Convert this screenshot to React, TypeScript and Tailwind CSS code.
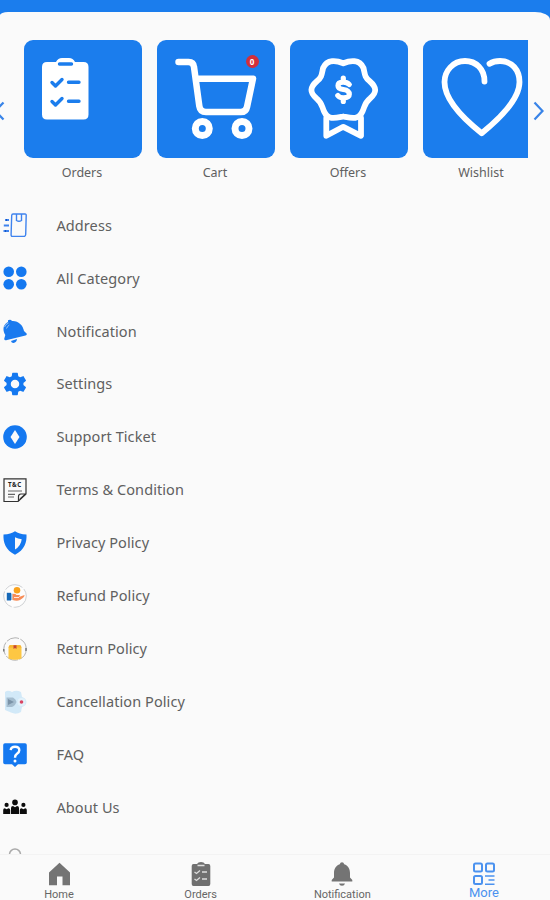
import React from 'react';

const OrdersArt = () => (
  <svg viewBox="0 0 118 118" className="h-full w-full" fill="none" strokeLinecap="round" strokeLinejoin="round">
    <path d="M23 22H32Q34 18 38 18H45Q49 18 51 22H59.500Q64.500 22 64.500 27V74.500Q64.500 79.500 59.500 79.500H23Q18 79.500 18 74.500V27Q18 22 23 22Z" fill="#fff" />
    <path d="M35.500 24H47.500M44.500 42.300H55M44.500 61.300H55" stroke="#1b7ded" strokeWidth="3.400" />
    <path d="M28 42.500L31.500 46L38 39.500M28 61.500L31.500 65L38 58.500" stroke="#1b7ded" strokeWidth="3.400" />
  </svg>
);

const CartArt = () => (
  <svg viewBox="0 0 118 118" className="h-full w-full" fill="none" stroke="#fff" strokeWidth="6.500" strokeLinecap="round" strokeLinejoin="round">
    <path d="M21.500 22H31.500Q36.500 22 37 27L42.300 66Q43.200 72 49 72H84Q89 72 90 67L96 38.700H39.500" />
    <circle cx="45.300" cy="88.500" r="7" strokeWidth="7" />
    <circle cx="85" cy="88.500" r="7" strokeWidth="7" />
  </svg>
);

const OffersArt = () => (
  <svg viewBox="0 0 118 118" className="h-full w-full" fill="none" stroke="#fff" strokeWidth="5.800" strokeLinecap="round" strokeLinejoin="round">
    <path d="M53.300 23.300C60 20.500 69.500 19 73.500 28C75 34.500 74.500 37 79.500 41C87 47.500 87 52.500 80 58.500C74.500 63 75 66 72.500 71.500C68.500 80.500 61 78 53.300 76.500C45.600 78 38.100 80.500 34.100 71.500C31.600 66 32.100 63 26.600 58.500C19.600 52.500 19.600 47.500 27.100 41C32.100 37 31.600 34.500 33.100 28C37.100 19 46.600 20.500 53.300 23.300Z" />
    <path d="M36.300 78V95.800L53.300 86.800L71 95.800V78" />
    <path d="M59.300 44.500Q57 42.200 53.300 42.200Q48 42.200 48 45.700Q48 48.700 53.300 49.500Q59.300 50.300 59.300 54.300Q59.300 57.800 53.300 57.800Q49.500 57.800 47.800 55.500M53.300 38V41M53.300 59V61.500" strokeWidth="5.200" />
  </svg>
);

const HeartArt = () => (
  <svg viewBox="0 0 118 118" className="h-full w-full" fill="none" stroke="#fff" strokeWidth="5.800" strokeLinecap="round" strokeLinejoin="round">
    <path d="M61.500 41.500C61.500 29 53 21 42 21C30 21 21.500 31 21.500 42C21.500 60 42 80 58.700 93.200C75 80 96.500 60 96.500 42C96.500 30 89 21 77 21Q71 21 66.500 23.800" />
  </svg>
);

const AddressIcon = () => (
  <svg viewBox="0 0 24 24" className="h-6 w-6" fill="none" stroke="#3f83ee" strokeWidth="1.400">
    <path d="M10 1H22Q23.300 1 23.200 2.500L22.700 21.500Q22.500 23.400 21 23.400H9.700Q8 23.400 8.100 21.500L8.700 2.500Q8.800 1 10 1Z" />
    <path d="M13.500 1V7.500Q16 9 18.500 7.500V1" />
    <path d="M2 7H6M.8 12.500H6M.5 18H6" strokeWidth="2" />
    <path d="M3 7H4M2 18H3" stroke="#1555c0" strokeWidth="2" />
  </svg>
);

const CategoryIcon = () => (
  <svg viewBox="0 0 24 24" className="h-6 w-6" fill="#1478f0">
    <circle cx="5.700" cy="5.700" r="5.300" />
    <circle cx="18.300" cy="5.700" r="5.300" />
    <circle cx="5.700" cy="18.300" r="5.300" />
    <circle cx="18.300" cy="18.300" r="5.300" />
  </svg>
);

const BellIcon = () => (
  <svg viewBox="0 0 24 24" className="h-6 w-6" fill="#1a7aef">
    <path d="M5 1.300Q7.500-.3 9 2C15 1.500 20 6 21 12L23.800 14.700Q24 16.300 22.500 16.500L3 21.300Q1 21.500 1.300 19.500L2.300 16C-1 10 .3 5.500 5 3Z" />
    <path d="M8 22L14 20Q13.500 23.700 10.500 23.900Q8.500 24 8 22Z" />
    <path d="M1.500 8Q2.500 5 5.500 4M3.500 9.500Q4.300 7.300 6.300 6" stroke="#c5dcf8" strokeWidth=".7" fill="none" />
  </svg>
);

const GearIcon = () => (
  <svg viewBox="1.800 1.800 20.400 20.400" className="h-6 w-6" fill="#1478f0">
    <path d="M19.140 12.940c.04-.3.06-.61.06-.94 0-.32-.02-.64-.07-.94l2.030-1.580c.18-.14.23-.41.12-.61l-1.920-3.320c-.12-.22-.37-.29-.59-.22l-2.390.96c-.5-.38-1.030-.7-1.620-.94L14.400 2.810c-.04-.24-.24-.41-.48-.41h-3.840c-.24 0-.43.17-.47.41L9.250 5.350C8.660 5.590 8.120 5.920 7.630 6.290L5.240 5.330c-.22-.08-.47 0-.59.22L2.740 8.870c-.12.21-.08.47.12.61l2.030 1.580c-.05.3-.09.63-.09.94s.02.64.07.94l-2.030 1.580c-.18.14-.23.41-.12.61l1.920 3.320c.12.22.37.29.59.22l2.390-.96c.5.38 1.030.7 1.620.94l.36 2.540c.05.24.24.41.48.41h3.840c.24 0 .44-.17.47-.41l.36-2.540c.59-.24 1.130-.56 1.620-.94l2.390.96c.22.08.47 0 .59-.22l1.920-3.320c.12-.22.07-.47-.12-.61zM12 15.600a3.600 3.600 0 1 1 0-7.200 3.600 3.600 0 0 1 0 7.200z" />
  </svg>
);

const TicketIcon = () => (
  <svg viewBox="0 0 24 24" className="h-6 w-6">
    <circle cx="12" cy="12" r="11.800" fill="#1478f0" />
    <path d="M12 5L16.500 12L12 19L7.500 12Z" fill="#fafafa" />
  </svg>
);

const TermsIcon = () => (
  <svg viewBox="0 0 24 24" className="h-6 w-6" fill="none" stroke="#333" strokeWidth="1.200">
    <path d="M1 .8H23V16L15 23.500H1Z" />
    <path d="M23 16H18Q15.500 16 15.500 18.500V23M17 21L22 16.500" />
    <path d="M5 13H19M5 16.300H12M5 19H11" stroke="#666" />
    <text x="12" y="9.300" textAnchor="middle" fontSize="6.200" fontWeight="700" fill="#222" stroke="none" letterSpacing=".6">T&amp;C</text>
  </svg>
);

const PrivacyIcon = () => (
  <svg viewBox="0 0 24 24" className="h-6 w-6">
    <path d="M12 .2Q16 3 23.500 3.500C24 11 21.500 19 12 23.800C2.500 19 0 11 .5 3.500Q8 3 12 .2Z" fill="#1478f0" />
    <path d="M12 6.300Q15 8 18.700 8.300Q18 15 12 18.500Z" fill="#fafafa" />
  </svg>
);

const RefundIcon = () => (
  <svg viewBox="0 0 24 24" className="h-6 w-6">
    <circle cx="12" cy="12" r="11.300" fill="#fdfdfd" stroke="#c9cccf" strokeWidth=".9" strokeDasharray="19 2" />
    <circle cx="14" cy="6.300" r="3.300" fill="#f9a21c" />
    <path d="M3.800 8.800H8V16.500H3.800Z" fill="#1769b8" />
    <path d="M8 9.500H9.500V16H8Z" fill="#8cc0e5" />
    <path d="M9.500 10Q12 9 13.500 11H17L16 13L21.500 11Q22 13 17 16Q14 17.500 9.500 16Z" fill="#f78d58" />
    <path d="M11 13.500H16" stroke="#fff" strokeWidth=".8" />
  </svg>
);

const ReturnIcon = () => (
  <svg viewBox="0 0 24 24" className="h-6 w-6">
    <circle cx="12" cy="12" r="11.200" fill="none" stroke="#aaa" strokeWidth=".9" strokeDasharray="13 1.500" />
    <path d="M7 8H17L18.500 10V21.500Q12 24 5.500 21.500V10Z" fill="#fdc743" />
    <path d="M6.500 8.300H17.500L18.500 10.500H5.500Z" fill="#f6b433" />
    <path d="M10.500 8.300H13.500V12L12 11L10.500 12Z" fill="#c74834" />
    <path d="M23 11V14M.8 12V14.500" stroke="#666" strokeWidth="1.200" />
  </svg>
);

const CancelIcon = () => (
  <svg viewBox="0 0 24 24" className="h-6 w-6">
    <path d="M2 2Q5-.3 9 2Q13-.5 18 2L19 7Q23 8 23.500 12Q23 16 19 17L18 22Q13 25 8 22.500L2 20Z" fill="#d2e9f8" />
    <path d="M3.500 7.500H10Q13 9 13.500 12Q12 16 9 17H3.500Z" fill="#a5bdcf" />
    <path d="M5 9L11 12L5 15Z" fill="#7b93a8" />
    <circle cx="18.500" cy="12" r="4" fill="#e3f1fa" />
    <circle cx="18.500" cy="12" r="1.800" fill="#d94563" />
  </svg>
);

const FaqIcon = () => (
  <svg viewBox="0 0 24 24" className="h-6 w-6">
    <path d="M2 .3H22Q23.800.3 23.800 2V19.500Q23.800 21.200 22 21.200H15L12 24L9 21.200H2Q.2 21.200.2 19.500V2Q.2.3 2 .3Z" fill="#1478f0" />
    <path d="M7.700 7.200Q8 3.700 12 3.700Q16.300 3.700 16.300 7.300Q16.300 9.300 14 10.800Q12 12.200 12 14.700" fill="none" stroke="#fff" strokeWidth="2.400" />
    <circle cx="12" cy="18" r="1.500" fill="#fff" />
  </svg>
);

const AboutIcon = () => (
  <svg viewBox="0 0 24 24" className="h-6 w-6" fill="#0c0c0c">
    <circle cx="12" cy="7.400" r="2.800" />
    <circle cx="3.600" cy="9.900" r="2.100" />
    <circle cx="20.400" cy="9.900" r="2.100" />
    <path d="M8 19V13Q8 11 10 11L12 12.300L14 11Q16 11 16 13V19Z" />
    <path d="M.2 19V15Q.2 13.200 1.800 13.200L3.600 14.200L5.400 13.200Q7.200 13.200 7.200 15V19ZM16.800 19V15Q16.800 13.200 18.600 13.200L20.400 14.200L22.200 13.200Q23.800 13.200 23.800 15V19Z" />
  </svg>
);

const CARDS = [
  { label: 'Orders', Art: OrdersArt },
  { label: 'Cart', Art: CartArt, badge: '0' },
  { label: 'Offers', Art: OffersArt },
  { label: 'Wishlist', Art: HeartArt },
];

const MENU = [
  { label: 'Address', Icon: AddressIcon },
  { label: 'All Category', Icon: CategoryIcon },
  { label: 'Notification', Icon: BellIcon },
  { label: 'Settings', Icon: GearIcon },
  { label: 'Support Ticket', Icon: TicketIcon },
  { label: 'Terms & Condition', Icon: TermsIcon },
  { label: 'Privacy Policy', Icon: PrivacyIcon },
  { label: 'Refund Policy', Icon: RefundIcon },
  { label: 'Return Policy', Icon: ReturnIcon },
  { label: 'Cancellation Policy', Icon: CancelIcon },
  { label: 'FAQ', Icon: FaqIcon },
  { label: 'About Us', Icon: AboutIcon },
];

const HomeTab = () => (
  <svg viewBox="0 0 24 24" className="h-6 w-6" fill="#747474">
    <path d="M12.500.8L23 10.500V23.200H15.500V14.500H10V23.200H2V10.500Z" />
  </svg>
);

const OrdersTab = () => (
  <svg viewBox="0 0 24 24" className="h-6 w-6">
    <path d="M4.500 2H8Q9 0 12 0T16 2H19.500Q21.300 2 21.300 4V22Q21.300 24 19.500 24H4.500Q2.700 24 2.700 22V4Q2.700 2 4.500 2Z" fill="#707070" />
    <path d="M8.500 3.500H15.500M13 10H18M13 17H18M5.500 10L7.500 11.500L11 8.500M5.500 17L7.500 18.500L11 15.500" fill="none" stroke="#ddd" strokeWidth="1.300" />
  </svg>
);

const BellTab = () => (
  <svg viewBox="0 0 24 24" className="h-6 w-6" fill="#747474">
    <path d="M12 .3Q13.800.3 14.200 2.200C18 3.500 20 6.500 20 11V15.500L22.300 18V19.500H1.700V18L4 15.500V11C4 6.500 6 3.500 9.800 2.200Q10.200.3 12 .3Z" />
    <path d="M9 21.500H15Q14.500 23.800 12 23.800T9 21.500Z" />
  </svg>
);

const MoreTab = () => (
  <svg viewBox="0 0 24 24" className="h-6 w-6" fill="none" stroke="#4b92ef" strokeWidth="2">
    <rect x="2" y="1.500" width="8" height="8" rx="1.500" />
    <rect x="14" y="1.500" width="8" height="8" rx="1.500" />
    <rect x="2" y="14" width="8" height="8" rx="1.500" />
    <path d="M13 14H22.500M16.500 18H22.500M13 22.300H22.500" strokeWidth="1.600" />
  </svg>
);

const TABS = [
  { label: 'Home', Icon: HomeTab, className: 'mt-[1.500px] text-[#666] text-[11px]' },
  { label: 'Orders', Icon: OrdersTab, className: 'mt-[1.500px] text-[#666] text-[11px]' },
  { label: 'Notification', Icon: BellTab, className: 'mt-[1.500px] text-[#666] text-[11px]' },
  { label: 'More', Icon: MoreTab, className: 'text-[#4b92ef] text-[13px]' },
];

const App: React.FC = () => {
  return (
    <div className="flex h-[900px] w-[550px] flex-col overflow-hidden bg-[#1b7ded] pt-3 font-['Noto_Sans','Open_Sans',sans-serif] text-[#606060]">
      <main className="flex min-h-0 flex-1 flex-col overflow-hidden rounded-tl-[8px_3px] rounded-tr-[15px_8px] bg-[#fafafa]">
        <section className="flex h-[187px] shrink-0 pt-[27.500px]">
          <div className="flex h-[142px] w-[23.500px] shrink-0 items-center">
            <svg viewBox="0 0 12 20" className="-ml-[7px] h-5 w-3" fill="none" stroke="#3984e8" strokeWidth="2.200">
              <path d="M10.500 1.500L2.500 10L10.500 18.500" />
            </svg>
          </div>
          <div className="flex w-[504.500px] gap-[15px] overflow-hidden">
            {CARDS.map(({ label, Art, badge }) => (
              <div key={label} className="w-[118px] shrink-0 text-center">
                <div className="relative h-[118px] rounded-[9px] bg-[#1b7ded]">
                  <Art />
                  {badge && (
                    <span className="absolute top-[15.500px] left-[89px] flex h-[13px] w-[13px] items-center justify-center rounded-full bg-[#d22f3b] text-[8px] leading-none font-bold text-white">
                      {badge}
                    </span>
                  )}
                </div>
                <p className="mt-[6px] pr-px text-[12.500px] leading-[18px]">{label}</p>
              </div>
            ))}
          </div>
          <div className="flex h-[142px] items-center pl-[5px]">
            <svg viewBox="0 0 12 20" className="h-5 w-3" fill="none" stroke="#3984e8" strokeWidth="2.200">
              <path d="M1.500 1.500L9.500 10L1.500 18.500" />
            </svg>
          </div>
        </section>

        <ul className="min-h-0 flex-1 overflow-hidden">
          {MENU.map(({ label, Icon }) => (
            <li key={label} className="flex h-[52.920px] items-center pl-[3px]">
              <Icon />
              <span className="ml-[29.500px] pb-[1.500px] text-[14.500px] leading-5 tracking-[0.08px]">{label}</span>
            </li>
          ))}
          {/* next row, cut off by the tab bar */}
          <li className="flex h-[53px] items-center pl-[3px]">
            <svg viewBox="0 0 24 24" className="h-6 w-6" fill="none" stroke="#aaa" strokeWidth="1.500">
              <circle cx="12" cy="6.500" r="5.500" />
            </svg>
          </li>
        </ul>
      </main>

      <nav className="h-[46px] shrink-0 border-t border-[#f3f3f3] bg-[#fafafa] pt-[7px] font-['Roboto',sans-serif]">
        <div className="flex w-[543px] justify-between">
          {TABS.map(({ label, Icon, className }) => (
            <div key={label} className="flex w-[118px] flex-col items-center">
              <Icon />
              <span className={`${className} leading-[14px]`}>{label}</span>
            </div>
          ))}
        </div>
      </nav>
    </div>
  );
};

export default App;
